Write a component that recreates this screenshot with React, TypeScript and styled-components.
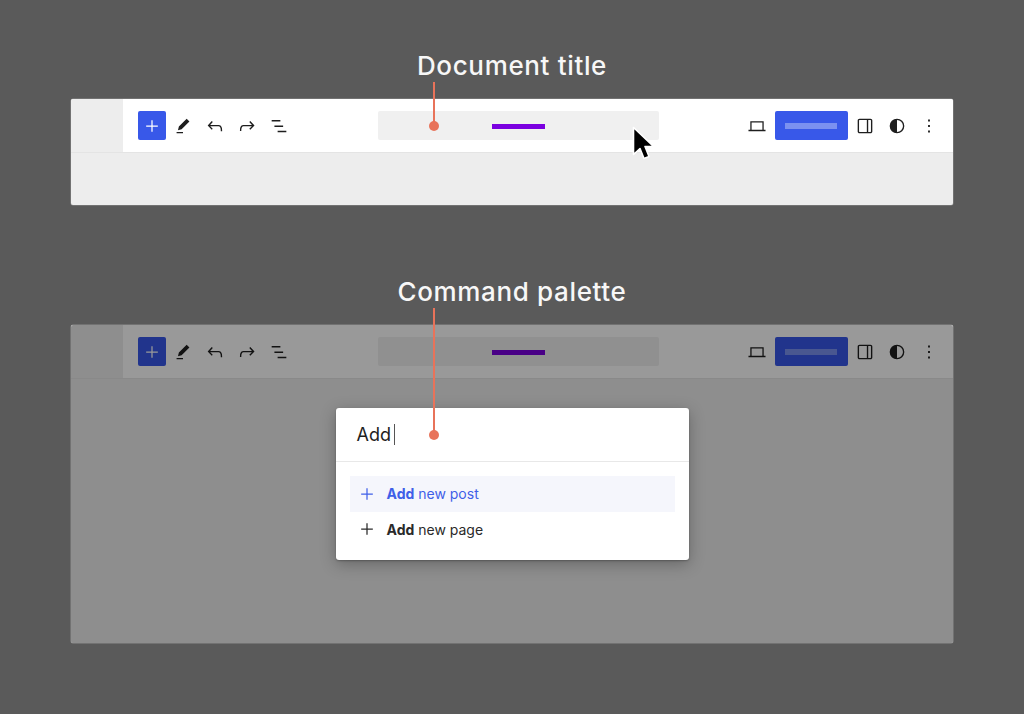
import React from "react";
import styled, { createGlobalStyle } from "styled-components";

const Global = createGlobalStyle`
  html, body { margin: 0; background: #5a5a5a; }
  body { font-family: Inter, "Liberation Sans", sans-serif; }
`;

const Page = styled.main`
  display: flex;
  flex-direction: column;
  gap: 71px;
  height: 714px;
  box-sizing: border-box;
  padding: 50px 71px 0;
  overflow: hidden;
`;

const Section = styled.section`
  position: relative;
  display: flex;
  flex-direction: column;
  gap: 17px;
`;

const Heading = styled.h2`
  margin: 0;
  height: 32px;
  line-height: 32px;
  text-align: center;
  color: #f7f7f7;
  font-size: 26px;
  font-weight: 500;
  letter-spacing: 0.65px;
`;

const Frame = styled.div<{ $height: number }>`
  position: relative;
  height: ${(p) => p.$height}px;
  background: #ededed;
  border-radius: 2px;
  box-shadow: 0 0 0 0.5px rgba(190, 190, 190, 0.5);
  overflow: hidden;
`;

const Chrome = styled.div`
  display: flex;
  height: 53px;
  border-bottom: 1px solid #e4e4e4;
`;

const Corner = styled.div`
  width: 52px;
  flex: none;
  background: #ededed;
`;

const Bar = styled.div`
  flex: 1;
  display: grid;
  grid-template-columns: 255px 281px 1fr;
  align-items: center;
  height: 53px;
  background: #fff;
`;

const Tools = styled.div`
  display: flex;
  align-items: center;
  gap: 10px;
  padding-left: 15px;
`;

const RightTools = styled(Tools)`
  justify-content: flex-end;
  padding-left: 0;
  padding-right: 13px;
`;

const PlusButton = styled.div`
  width: 28px;
  height: 29px;
  margin-right: -4px;
  display: flex;
  align-items: center;
  justify-content: center;
  background: #3858e9;
  border-radius: 2px;
  color: #fff;
`;

const PublishButton = styled.div`
  width: 73px;
  height: 29px;
  margin: 0 -3.5px;
  display: flex;
  align-items: center;
  justify-content: center;
  background: #3858e9;
  border-radius: 2px;
`;

const PublishLabel = styled.div`
  width: 52px;
  height: 6px;
  margin-top: 1px;
  background: rgba(255, 255, 255, 0.34);
`;

const TitleField = styled.div`
  height: 29px;
  display: flex;
  align-items: center;
  justify-content: center;
  background: #f0f0f0;
  border-radius: 2px;
`;

const TitleMark = styled.div`
  width: 53px;
  height: 5px;
  margin-left: -1px;
  margin-top: 2px;
  background: #7b00e0;
`;

const Glyph = styled.svg<{ $size?: number; $tint?: boolean }>`
  display: block;
  flex: none;
  width: ${(p) => p.$size ?? 22}px;
  height: ${(p) => p.$size ?? 22}px;
  fill: currentColor;
  color: ${(p) => (p.$tint ? "inherit" : "#1e1e1e")};
`;

const Scrim = styled.div`
  position: absolute;
  inset: 0;
  display: flex;
  justify-content: center;
  align-items: flex-start;
  padding-top: 83px;
  background: rgba(0, 0, 0, 0.4);
`;

const Palette = styled.div`
  width: 353px;
  height: 152px;
  background: #fff;
  border-radius: 3px;
  box-shadow: 0 4px 16px rgba(0, 0, 0, 0.28), 0 1px 2px rgba(0, 0, 0, 0.25);
`;

const SearchRow = styled.div`
  display: flex;
  align-items: center;
  gap: 3px;
  height: 53px;
  padding-left: 21px;
  border-bottom: 1px solid #e8e8e8;
  color: #1e1e1e;
  font-size: 18px;
  line-height: 24px;
`;

const Caret = styled.span`
  width: 1px;
  height: 21px;
  background: #555;
`;

const Results = styled.ul`
  list-style: none;
  margin: 0;
  padding: 14px 14px 0;
`;

const Result = styled.li<{ $active?: boolean }>`
  display: flex;
  align-items: center;
  gap: 10px;
  height: 35.5px;
  padding-left: 7px;
  font-size: 14px;
  color: ${(p) => (p.$active ? "#3f5fe8" : "#2a2a2a")};
  background: ${(p) => (p.$active ? "#f5f6fc" : "transparent")};
  strong { font-weight: 700; }
`;

const PinLine = styled.div<{ $height: number }>`
  position: absolute;
  left: 363px;
  top: 32px;
  width: 2px;
  margin-left: -1px;
  height: ${(p) => p.$height}px;
  background: #e8735a;
  &::after {
    content: "";
    position: absolute;
    left: -4px;
    bottom: -5px;
    width: 10px;
    height: 10px;
    border-radius: 50%;
    background: #e8735a;
  }
`;

const Pointer = styled.svg`
  position: absolute;
  left: 561px;
  top: 76px;
  width: 22px;
  height: 34px;
`;

const PLUS = "M11.25 5h1.5v6.25H19v1.5h-6.25V19h-1.5v-6.25H5v-1.5h6.25z";

const ToolbarRow = () => (
  <Chrome>
    <Corner />
    <Bar>
      <Tools>
        <PlusButton>
          <Glyph $size={20} $tint viewBox="0 0 24 24">
            <path d={PLUS} />
          </Glyph>
        </PlusButton>
        <Glyph viewBox="0 0 24 24">
          <path d="m19 7-3-3-8.5 8.5-1 4 4-1L19 7Zm-7 11.5H5V20h7v-1.5Z" />
        </Glyph>
        <Glyph viewBox="0 0 24 24">
          <path d="M18.3 11.7c-.6-.6-1.4-.9-2.3-.9H6.7l2.9-3.3-1.1-1-4.5 5L8.5 16l1-1-2.7-2.7H16c.5 0 .9.2 1.3.5 1 1 1 3.4 1 4.5v.3h1.5v-.2c0-1.5 0-4.3-1.5-5.7z" />
        </Glyph>
        <Glyph viewBox="0 0 24 24">
          <path d="M15.6 6.5l-1.1 1 2.9 3.3H8c-.9 0-1.7.3-2.3.9-1.4 1.5-1.4 4.2-1.4 5.6v.2h1.5v-.3c0-1.1 0-3.5 1-4.5.3-.3.7-.5 1.3-.5h9.2L14.5 15l1.1 1.1 4.6-4.6-4.6-5z" />
        </Glyph>
        <Glyph viewBox="0 0 24 24">
          <path d="M4 5.5h9.5V7H4V5.5ZM7 11.5h9.5V13H7v-1.5ZM20 17.2h-9.5v1.5H20v-1.5Z" />
        </Glyph>
      </Tools>
      <TitleField>
        <TitleMark />
      </TitleField>
      <RightTools>
        <Glyph viewBox="0 0 24 24">
          <path d="M4.7 6.9h14.6v9.1h2v1.6H2.7V16h2Zm1.4 1.4V16h11.8V8.3Z" />
        </Glyph>
        <PublishButton>
          <PublishLabel />
        </PublishButton>
        <Glyph viewBox="0 0 24 24">
          <path d="M18 4H6c-1.1 0-2 .9-2 2v12c0 1.1.9 2 2 2h12c1.1 0 2-.9 2-2V6c0-1.1-.9-2-2-2zM5.5 18V6c0-.3.2-.5.5-.5h8v13H6c-.3 0-.5-.2-.5-.5zm13 0c0 .3-.2.5-.5.5h-2.5v-13H18c.3 0 .5.2.5.5v12z" />
        </Glyph>
        <Glyph viewBox="0 0 24 24">
          <path d="M12 4a8 8 0 1 0 0 16 8 8 0 0 0 0-16Zm0 14.5v-13a6.5 6.5 0 0 1 0 13Z" />
        </Glyph>
        <Glyph viewBox="0 0 24 24">
          <path d="M13 19h-2v-2h2v2zm0-6h-2v-2h2v2zm0-6h-2V5h2v2z" />
        </Glyph>
      </RightTools>
    </Bar>
  </Chrome>
);

export default function App() {
  return (
    <>
      <Global />
      <Page>
        <Section>
          <Heading>Document title</Heading>
          <Frame $height={106}>
            <ToolbarRow />
          </Frame>
          <PinLine $height={44} />
          <Pointer viewBox="0 0 22 34">
            <path
              d="M1.5 1.5v27l6.5-6 4 10 5-2-4-10h8.5z"
              fill="#000"
              stroke="#fff"
              strokeWidth="1.6"
              strokeLinejoin="round"
            />
          </Pointer>
        </Section>
        <Section>
          <Heading>Command palette</Heading>
          <Frame $height={318}>
            <ToolbarRow />
            <Scrim>
              <Palette>
                <SearchRow>
                  <span>Add</span>
                  <Caret />
                </SearchRow>
                <Results>
                  <Result $active>
                    <Glyph $size={20} $tint viewBox="0 0 24 24">
                      <path d={PLUS} />
                    </Glyph>
                    <span>
                      <strong>Add</strong> new post
                    </span>
                  </Result>
                  <Result>
                    <Glyph $size={20} $tint viewBox="0 0 24 24">
                      <path d={PLUS} />
                    </Glyph>
                    <span>
                      <strong>Add</strong> new page
                    </span>
                  </Result>
                </Results>
              </Palette>
            </Scrim>
          </Frame>
          <PinLine $height={127} />
        </Section>
      </Page>
    </>
  );
}
